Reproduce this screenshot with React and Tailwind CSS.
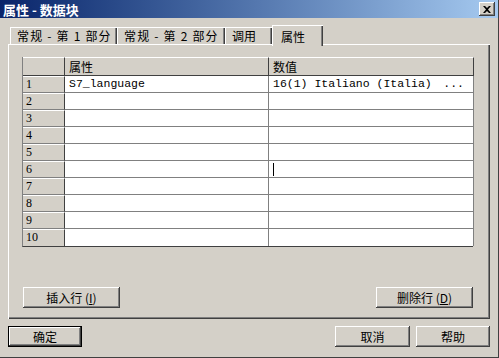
import React from 'react';

const cjk = "font-['SimSun','Noto_Sans_CJK_SC',sans-serif]";
const mono = "font-['Liberation_Mono','Noto_Sans_CJK_SC',monospace]";

const raised =
  'bg-[#d4d0c8] shadow-[inset_-1px_-1px_0_#404040,inset_1px_1px_0_#ffffff,inset_-2px_-2px_0_#808080]';

const Btn = ({ children, className = '', isDefault = false }) => (
  <div className={`h-[21px] ${isDefault ? 'border border-black' : ''} ${className}`}>
    <div className={`h-full w-full flex items-center justify-center text-[12px] text-black ${raised}`}>
      {children}
    </div>
  </div>
);

const Tab = ({ label, active, className = '' }) =>
  active ? (
    <div
      className={`relative z-10 h-[21px] -mb-[2px] px-[8px] pt-[2px] bg-[#d4d0c8] border-t border-l border-white shadow-[inset_-1px_0_0_#404040,inset_-2px_0_0_#808080] text-[12px] ${className}`}
    >
      {label}
    </div>
  ) : (
    <div
      className={`h-[17px] px-[6px] bg-[#d4d0c8] border-t border-l border-white shadow-[inset_-1px_0_0_#404040,inset_-2px_0_0_#808080] text-[12px] leading-[16px] whitespace-nowrap ${className}`}
    >
      {label}
    </div>
  );

const rows = [
  { name: 'S7_language', value: '16(1) Italiano (Italia)', more: true },
  ...Array.from({ length: 9 }, () => ({ name: '', value: '' })),
];

export default function App() {
  return (
    <div className={`w-[499px] h-[358px] bg-[#d4d0c8] ${cjk} text-black border-r border-b border-[#404040] overflow-hidden`}>
      {/* Title bar */}
      <div className="h-[18px] flex items-center justify-between bg-gradient-to-r from-[#0a246a] to-[#a6caf0] pl-[3px] pr-[3px]">
        <span className="text-white text-[13px] font-bold leading-none">属性 - 数据块</span>
        <div className={`w-[16px] h-[14px] flex items-center justify-center ${raised}`}>
          <svg width="8" height="7" viewBox="0 0 8 7">
            <path d="M0 0h2l2 2 2-2h2L5 3.5 8 7H6L4 5 2 7H0l3-3.5z" fill="#000" />
          </svg>
        </div>
      </div>

      <div className="px-[8px]">
        {/* Tabs */}
        <div className="mt-[7px] h-[19px] flex items-end pl-[2px]">
          <Tab label="常规 - 第 1 部分" className="w-[107px] tracking-[1.2px]" />
          <Tab label="常规 - 第 2 部分" className="w-[108px] tracking-[1.2px]" />
          <Tab label="调用" className="w-[47px]" />
          <Tab label="属性" active className="w-[51px]" />
        </div>

        {/* Panel */}
        <div className="h-[275px] border-t border-l border-white shadow-[inset_-1px_-1px_0_#404040,inset_-2px_-2px_0_#808080] pl-[13px] pt-[12px]">
          {/* Grid */}
          <div className="w-[451px] border-l border-[#808080] border-b border-b-[#404040] bg-white">
            <div className="grid grid-cols-[42px_204px_205px] h-[19px]">
              <div className="bg-[#d4d0c8] border-t border-white border-r border-r-[#404040] border-b border-b-[#404040]" />
              <div className="bg-[#d4d0c8] border-t border-white border-r border-r-[#404040] border-b border-b-[#404040] pl-[4px] text-[12px] leading-[17px]">
                属性
              </div>
              <div className="bg-[#d4d0c8] border-t border-white border-r border-r-[#404040] border-b border-b-[#404040] pl-[4px] text-[12px] leading-[17px]">
                数值
              </div>
            </div>
            {rows.map((r, i) => (
              <div key={i} className="grid grid-cols-[42px_204px_205px] h-[17px]">
                <div
                  className={`bg-[#d4d0c8] border-t border-white border-r border-r-[#404040] ${
                    i < rows.length - 1 ? 'border-b border-b-[#808080]' : ''
                  } pl-[3px] text-[12px] leading-[15px] font-['Liberation_Serif',serif]`}
                >
                  {i + 1}
                </div>
                <div
                  className={`border-r border-[#808080] ${
                    i < rows.length - 1 ? 'border-b border-b-[#808080]' : ''
                  } pl-[4px] ${mono} text-[11.5px] leading-[16px]`}
                >
                  {r.name}
                </div>
                <div
                  className={`relative ${i < rows.length - 1 ? 'border-b border-b-[#808080]' : ''} border-r border-r-[#808080] pl-[4px] pr-[9px] ${mono} text-[11.5px] leading-[16px] flex justify-between`}
                >
                  <span>{r.value}</span>
                  {r.more && <span>...</span>}
                  {i === 5 && <span className="absolute left-[4px] top-[2px] w-[1px] h-[13px] bg-black" />}
                </div>
              </div>
            ))}
          </div>

          {/* Row buttons */}
          <div className="mt-[40px] w-[451px] pl-[1px] flex justify-between">
            <Btn className="w-[97px]">插入行 (<span className="underline">I</span>)</Btn>
            <Btn className="w-[97px]">删除行 (<span className="underline">D</span>)</Btn>
          </div>
        </div>

        {/* Dialog buttons */}
        <div className="mt-[7px] flex">
          <Btn isDefault className="w-[74px]">确定</Btn>
          <div className="flex-1" />
          <Btn className="w-[75px]">取消</Btn>
          <Btn className="w-[74px] ml-[6px]">帮助</Btn>
        </div>
      </div>
    </div>
  );
}
